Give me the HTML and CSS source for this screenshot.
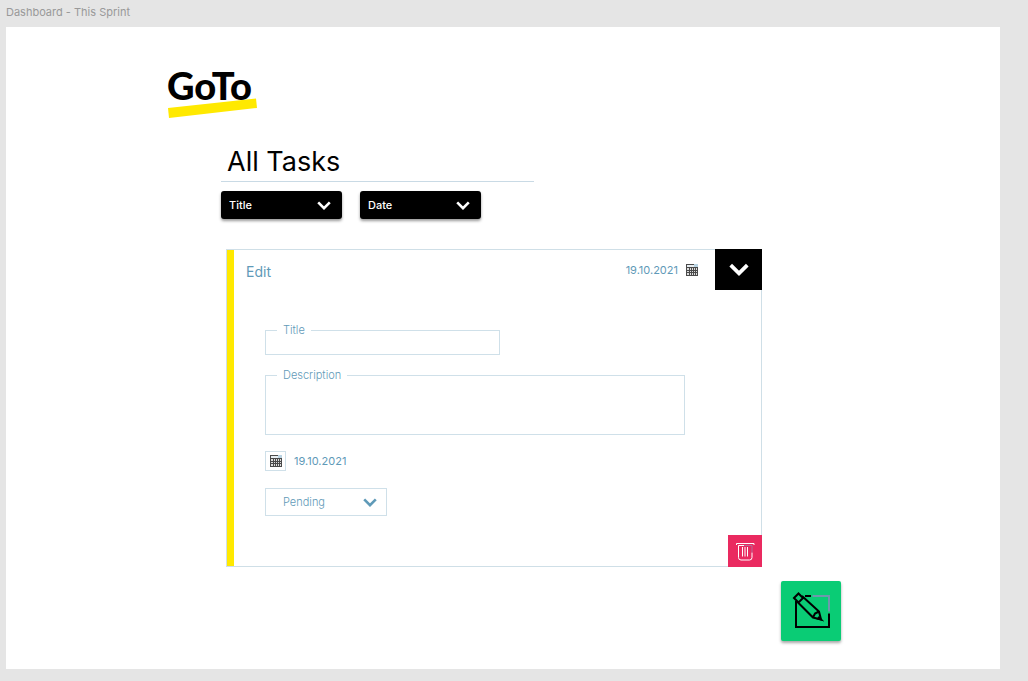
FILE: index.html
```html
<!DOCTYPE html>
<html lang="en">
<head>
<meta charset="utf-8">
<meta name="viewport" content="width=device-width, initial-scale=1">
<title>Dashboard - This Sprint</title>
<link rel="stylesheet" href="styles.css">
</head>
<body>
<svg class="sprite" aria-hidden="true">
  <symbol id="chevron" viewBox="0 0 14 9"><path d="M1.2 1.4 7 7.2l5.800-5.800" fill="none" stroke="currentColor" stroke-width="2.600"/></symbol>
  <symbol id="calendar" viewBox="0 0 12 12">
    <path d="M0 0h12v12H0z" fill="#4a4a4a"/>
    <path d="M1 1h7v2H1z" fill="#e8eef2"/><path d="M8 0h4v3H8z" fill="#b9d3e2"/>
    <path d="M1 4h2v2H1zM4 4h1v2H4zM6 4h1v2H6zM8 4h1v2H8zM10 4h1v2h-1zM1 7h2v1H1zM4 7h1v1H4zM6 7h1v1H6zM8 7h1v1H8zM10 7h1v1h-1zM1 9h2v2H1zM4 9h1v2H4zM6 9h1v2H6zM8 9h1v2H8zM10 9h1v2h-1z" fill="#ddd"/>
  </symbol>
</svg>
<p class="frame-name">Dashboard - This Sprint</p>
<div class="frame">
  <svg class="logo" viewBox="0 0 90 46" role="img" aria-label="GoTo">
    <path d="M0 35 88 25.500 89 35 1 45z" fill="#ffe900"/>
    <text class="logo-text" x="-1" y="27">GoTo</text>
  </svg>
  <main class="content">
    <h1 class="heading">All Tasks</h1>
    <div class="filters">
      <div class="picker picker-dark">
        <select aria-label="Sort by title"><option>Title</option></select>
        <svg class="picker-arrow"><use href="#chevron"/></svg>
      </div>
      <div class="picker picker-dark">
        <select aria-label="Sort by date"><option>Date</option></select>
        <svg class="picker-arrow"><use href="#chevron"/></svg>
      </div>
    </div>
    <article class="card">
      <div class="card-body">
        <header class="card-header">
          <h2 class="card-title">Edit</h2>
          <time class="date">19.10.2021</time>
          <svg class="calendar"><use href="#calendar"/></svg>
          <button class="collapse" type="button" aria-label="Collapse"><svg class="collapse-arrow"><use href="#chevron"/></svg></button>
        </header>
        <form class="form">
          <fieldset class="field field-title">
            <legend><label for="title">Title</label></legend>
            <input id="title" type="text">
          </fieldset>
          <fieldset class="field field-description">
            <legend><label for="description">Description</label></legend>
            <textarea id="description"></textarea>
          </fieldset>
          <div class="due">
            <button class="due-button" type="button" aria-label="Choose date"><svg class="calendar"><use href="#calendar"/></svg></button>
            <time class="date">19.10.2021</time>
          </div>
          <div class="picker picker-light">
            <select aria-label="Status"><option>Pending</option></select>
            <svg class="picker-arrow"><use href="#chevron"/></svg>
          </div>
        </form>
        <button class="delete" type="button" aria-label="Delete">
          <svg class="trash" viewBox="0 0 19 19" fill="none" stroke="#fff">
            <path d="M.5 3V1.500H18V3M2.500 3.500v12q0 2.500 2.500 2.500h8.500q2.500 0 2.500-2.500v-5M2.500 3.500H8M6.500 5v9.500M9 5v9.500M11.500 5v9.500"/>
            <path d="M8 3.500h8v7" stroke="#b06c98"/>
          </svg>
        </button>
      </div>
    </article>
  </main>
  <button class="compose" type="button" aria-label="New task">
    <svg class="compose-icon" viewBox="0 0 38 38" fill="none" stroke="#000" stroke-width="2">
      <path d="M13 4h6M4 9v26h33V21.500"/>
      <path d="M20.500 4H37v15.500" stroke="#6f97ac"/>
      <path d="M2 6l4.500-4.500L11 6l-4.500 4.500zM4 8.500 21 25.500l8 2-2-8L10 4M21 25.500l2-4 4-2"/>
      <path d="M27 25.500l2 2-3-.8z" fill="#000"/>
    </svg>
  </button>
</div>
</body>
</html>
```
FILE: styles.css
```css
* { box-sizing: border-box; }
body {
  margin: 0;
  padding: 4px 28px 12px 6px;
  background: #e5e5e5;
  color: #5f9ab8;
  font-family: Inter, "Liberation Sans", sans-serif;
  font-size: 11px;
}
button, input, select, textarea { font: inherit; color: inherit; border-radius: 0; }
button { display: flex; align-items: center; justify-content: center; border: 0; padding: 0; cursor: pointer; }
.sprite { position: absolute; width: 0; height: 0; }
.frame-name { margin: 0 0 7px; color: #999; line-height: 16px; }
.frame { display: flex; flex-direction: column; padding: 46px 159px 28px 162px; background: #fff; }
.logo { display: block; width: 90px; height: 46px; overflow: visible; }
.logo-text { font-family: Lato, sans-serif; font-size: 38px; font-weight: 900; fill: #000; }
.content { padding: 26px 79px 0 53px; }
.heading {
  width: 313px;
  margin: 0 0 9px;
  padding: 0 6px 2px;
  border-bottom: 1px solid #c9dae5;
  color: #000;
  font-size: 27px;
  font-weight: 400;
  line-height: 34px;
}
.filters { display: flex; gap: 18px; margin-bottom: 30px; }
.picker { position: relative; width: 121px; height: 28px; }
.picker select { width: 100%; height: 100%; border: 0; margin: 0; appearance: none; background: transparent; }
.picker-arrow { position: absolute; right: 12px; top: 10px; width: 14px; height: 9px; pointer-events: none; }
.picker-dark { border-radius: 3px; background: #000; color: #fff; box-shadow: 0 2px 3px rgba(0, 0, 0, .4); }
.picker-dark select { padding: 0 8px; font-weight: 500; }
.picker-dark .picker-arrow { right: 11px; }
.card { margin-left: 5px; border: 1px solid #cfdfe7; }
.card-body { display: flex; flex-direction: column; border-left: 7px solid #ffe900; }
.card-header { display: flex; align-items: center; height: 40px; }
.card-title { margin: 3px auto 0 12px; font-size: 14px; font-weight: 400; line-height: 16px; }
.date { line-height: 16px; font-size: 11px; }
.calendar { width: 12px; height: 12px; margin: 0 17px 0 8px; }
.collapse { width: 47px; height: 41px; margin: -1px -1px 0 0; background: #000; color: #fff; }
.collapse-arrow { width: 20px; height: 13px; }
.form { display: flex; flex-direction: column; align-items: flex-start; padding: 34px 76px 19px 31px; }
.field { min-width: 0; margin: 0; padding: 0; border: 1px solid #cfe0e9; }
.field legend { margin-left: 11px; padding: 0 6px; font-weight: 300; line-height: 12px; }
.field input, .field textarea { display: block; width: 100%; border: 0; padding: 0 8px; outline: 0; background: transparent; resize: none; }
.field-title { width: 235px; }
.field-title input { height: 18px; }
.field-description { width: 100%; margin: 14px 0 16px; }
.field-description textarea { height: 53px; }
.due { display: flex; align-items: center; gap: 8px; margin-bottom: 17px; }
.due-button { width: 21px; height: 20px; border: 1px solid #cfe0e9; background: #fff; }
.due-button .calendar { margin: 0; }
.picker-light { width: 122px; border: 1px solid #cfe0e9; }
.picker-light select { padding: 0 17px; font-weight: 300; }
.picker-light .picker-arrow { right: 9px; top: 9px; }
.delete { align-self: flex-end; width: 34px; height: 32px; margin: 0 -1px -1px 0; background: #ea2a60; }
.trash { width: 19px; height: 19px; }
.compose { align-self: flex-end; width: 60px; height: 60px; margin-top: 14px; border-radius: 2px; background: #0acc75; box-shadow: 0 2px 3px rgba(0, 0, 0, .35); }
.compose-icon { width: 38px; height: 38px; }
```
